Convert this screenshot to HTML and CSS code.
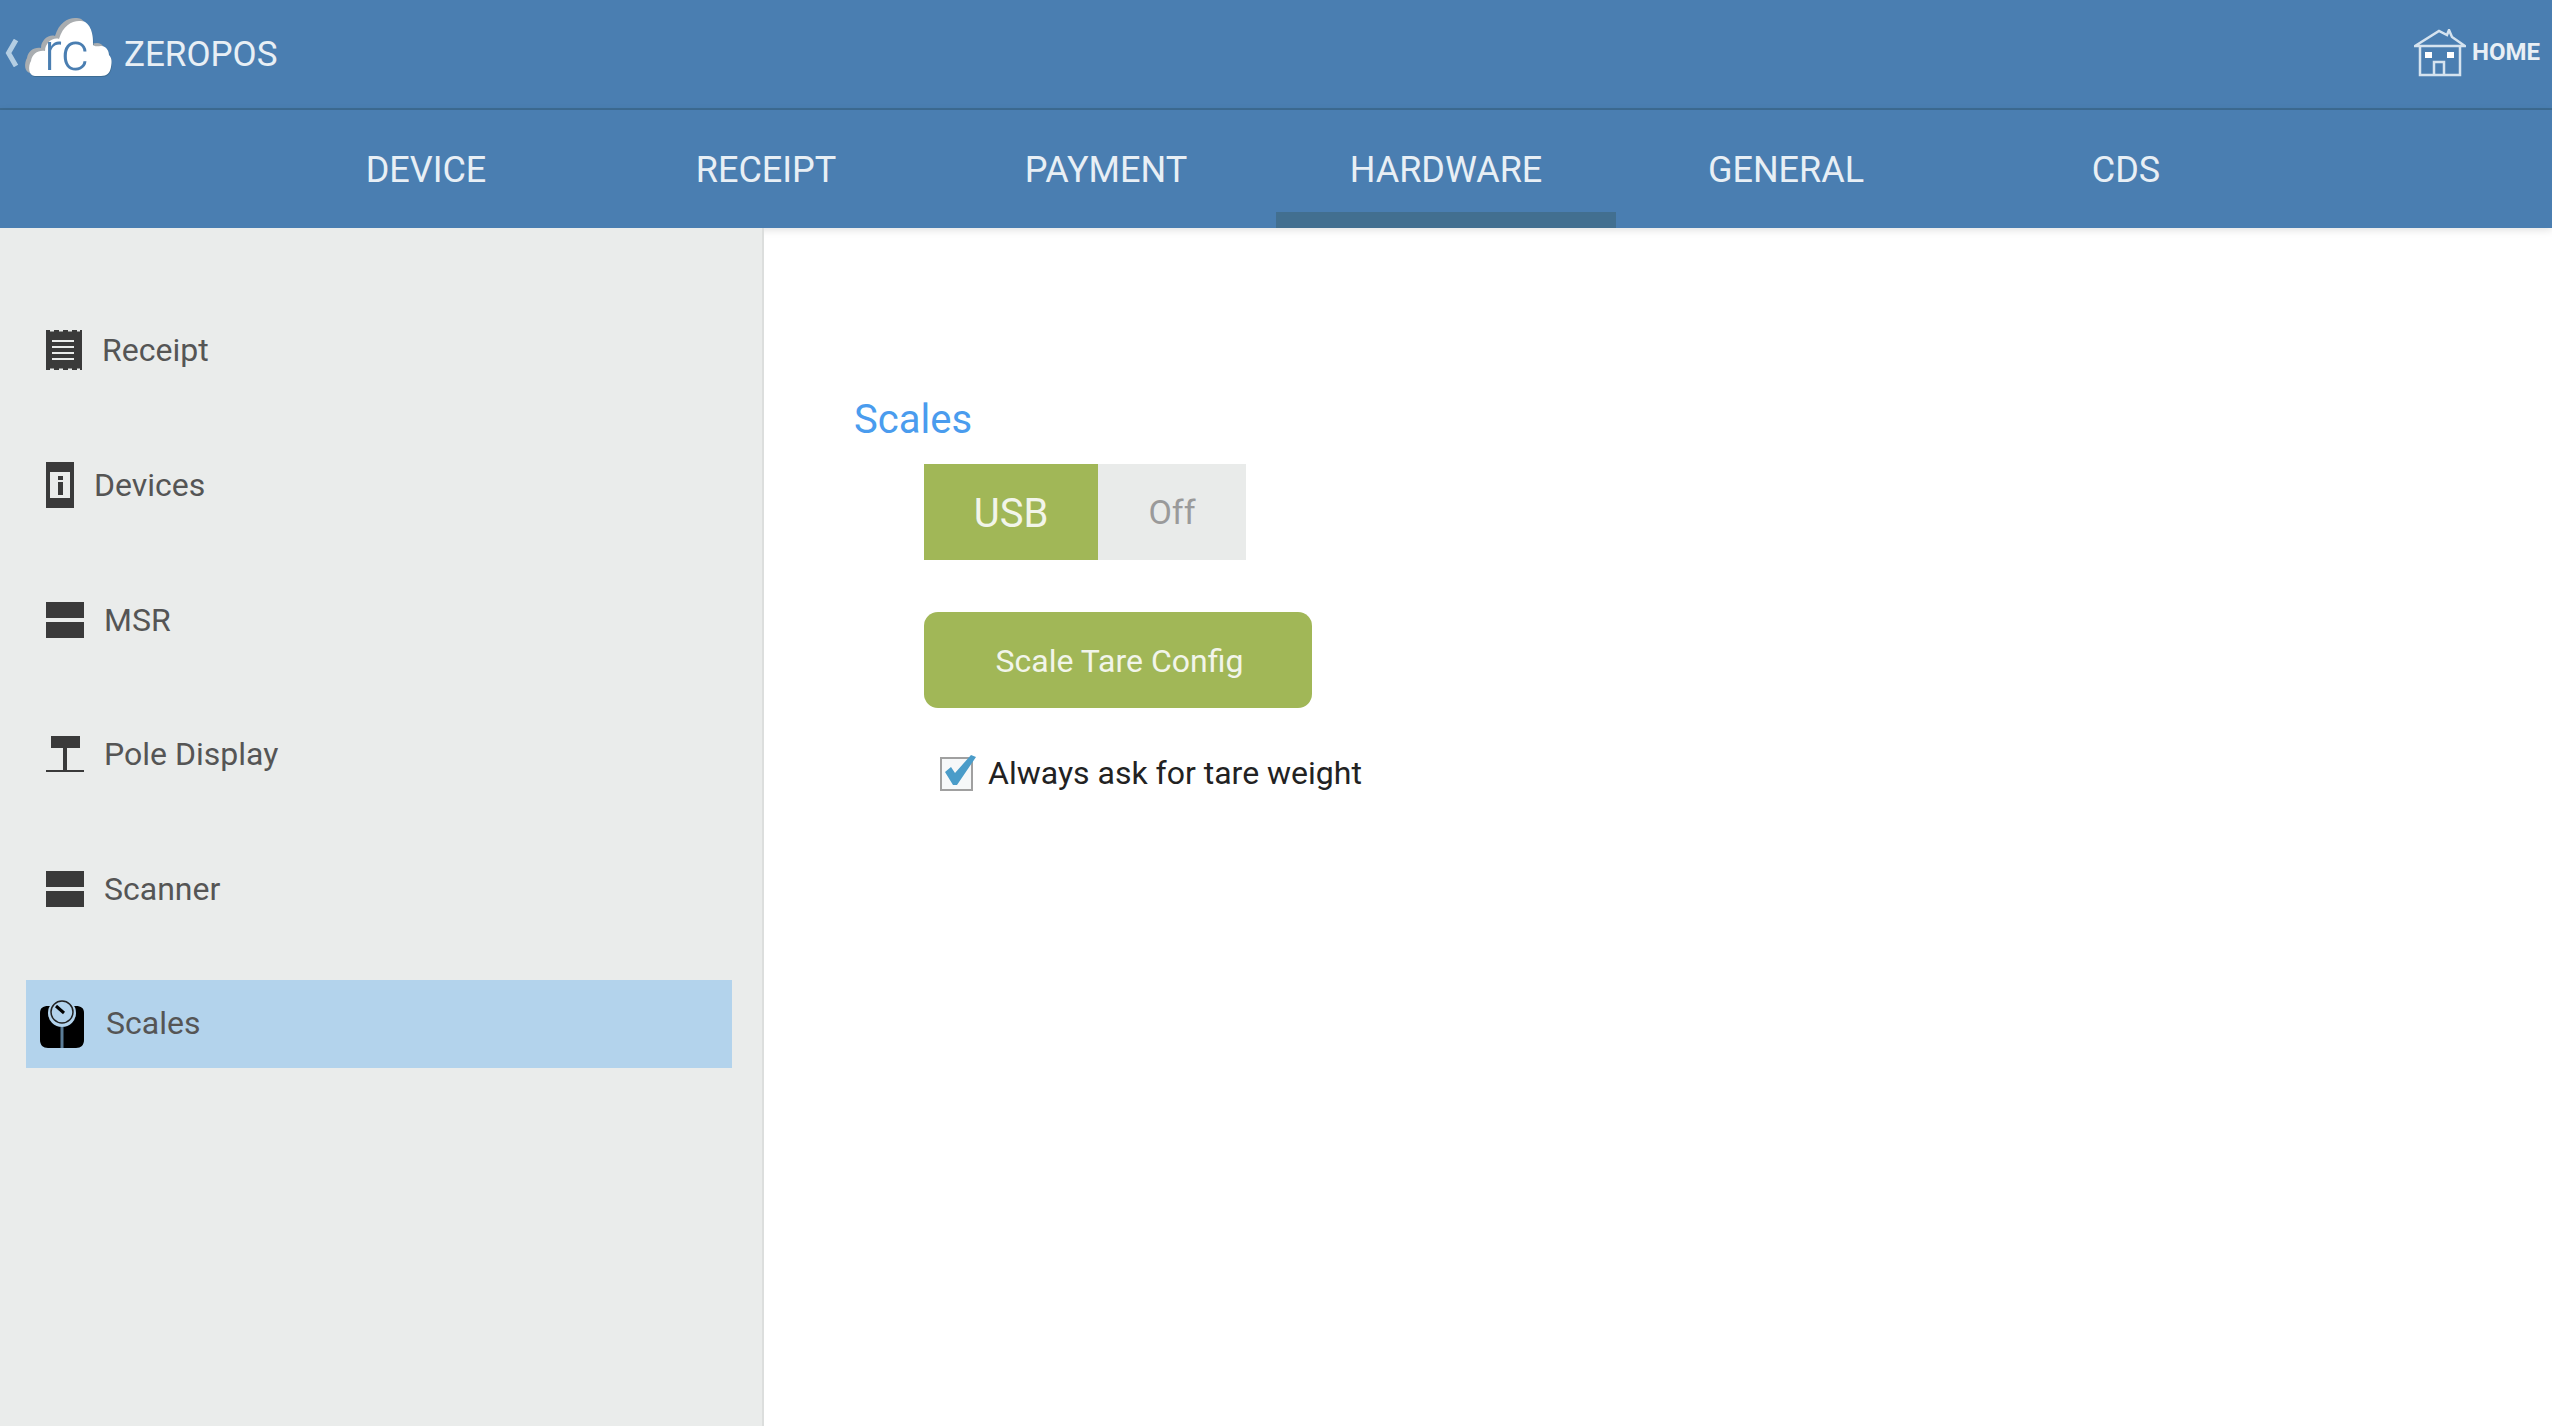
FILE: index.html
```html
<!DOCTYPE html>
<html lang="en">
<head>
    <meta charset="UTF-8">
    <meta name="viewport" content="width=device-width, initial-scale=1.0">
    <title>ZEROPOS Settings</title>
    <link rel="stylesheet" href="styles.css">
</head>
<body>
    <header class="top-bar">
        <div class="brand">
            <svg class="back-icon" width="14" height="28" viewBox="0 0 14 28">
                <path d="M11 1 L3.500 14 L11 27" fill="none" stroke="#b4cee3" stroke-width="5"/>
            </svg>
            <svg class="logo" width="92" height="72" viewBox="0 0 92 72">
                <defs>
                    <path id="cloud" d="M12 59 C5 59 5 49 8 44 C9 37 15 33 22 34 C22 26 30 20 36 22 C40 8 50 3 58 4 C66 4 71 15 70 28 C72 30 75 29 78 29 C84 29 86 35 86 38 C89 41 89 45 88 50 C87 56 84 59 78 59 Z"/>
                </defs>
                <use href="#cloud" x="-4" y="-3" fill="#a9adb0"/>
                <use href="#cloud" x="0.500" y="1" fill="#3d6c93"/>
                <use href="#cloud" fill="#fff"/>
                <text class="logo-text" x="21" y="53">rc</text>
            </svg>
            <span class="brand-name">ZEROPOS</span>
        </div>
        <div class="home">
            <svg width="52" height="48" viewBox="0 0 52 48" fill="none" stroke="#d5e3ef" stroke-width="2.500">
                <path d="M1 17 L25 2 L33 6 L35 1 L38 8 L51 17 Z"/>
                <path d="M6 18 V46 H46 V18"/>
                <path d="M20 46 V33 H30 V46"/>
                <rect x="11" y="23" width="7" height="6" fill="#fff" stroke="none"/>
                <rect x="33" y="23" width="7" height="6" fill="#fff" stroke="none"/>
            </svg>
            <span class="home-label">HOME</span>
        </div>
    </header>

    <nav class="tabs">
        <a class="tab">DEVICE</a>
        <a class="tab">RECEIPT</a>
        <a class="tab">PAYMENT</a>
        <a class="tab active">HARDWARE</a>
        <a class="tab">GENERAL</a>
        <a class="tab">CDS</a>
    </nav>

    <div class="main">
        <aside class="sidebar">
            <div class="side-item">
                <svg class="side-icon" width="36" height="40" viewBox="0 0 36 40">
                    <path d="M0 0 H36 V40 H0 Z" fill="#3a3a3a"/>
                    <path d="M4 0 H8 V1.500 H4 Z M13 0 H17 V1.500 H13 Z M22 0 H26 V1.500 H22 Z M31 0 H34 V1.500 H31 Z M4 38.500 H8 V40 H4 Z M13 38.500 H17 V40 H13 Z M22 38.500 H26 V40 H22 Z M31 38.500 H34 V40 H31 Z" fill="#eaeceb"/>
                    <path d="M6 10 H28 V12 H6 Z M6 16 H28 V18 H6 Z M6 22 H28 V24 H6 Z M6 28 H28 V30 H6 Z" fill="#eaeceb"/>
                </svg>
                <span>Receipt</span>
            </div>
            <div class="side-item">
                <svg class="side-icon" width="28" height="46" viewBox="0 0 28 46">
                    <rect width="28" height="46" fill="#3a3a3a"/>
                    <rect x="4" y="10" width="20" height="26" fill="#eaeceb"/>
                    <rect x="12" y="14" width="5" height="4" fill="#3a3a3a"/>
                    <rect x="12" y="20" width="5" height="13" fill="#3a3a3a"/>
                </svg>
                <span>Devices</span>
            </div>
            <div class="side-item">
                <svg class="side-icon" width="38" height="36" viewBox="0 0 38 36">
                    <rect width="38" height="36" fill="#3a3a3a"/>
                    <rect y="16" width="38" height="4" fill="#eaeceb"/>
                </svg>
                <span>MSR</span>
            </div>
            <div class="side-item">
                <svg class="side-icon" width="38" height="36" viewBox="0 0 38 36">
                    <rect x="5" y="0" width="29" height="12" fill="#3a3a3a"/>
                    <rect x="17" y="12" width="4" height="23" fill="#3a3a3a"/>
                    <rect x="0" y="34" width="38" height="2" fill="#3a3a3a"/>
                </svg>
                <span>Pole Display</span>
            </div>
            <div class="side-item">
                <svg class="side-icon" width="38" height="36" viewBox="0 0 38 36">
                    <rect width="38" height="36" fill="#3a3a3a"/>
                    <rect y="16" width="38" height="4" fill="#eaeceb"/>
                </svg>
                <span>Scanner</span>
            </div>
            <div class="side-item selected">
                <svg class="scale-icon" width="44" height="48" viewBox="0 0 44 48">
                    <path d="M8 6 H36 C41 6 44 8 44 13 V40 C44 45 41 48 36 48 H8 C3 48 0 45 0 40 V13 C0 8 3 6 8 6 Z" fill="#000"/>
                    <circle cx="22" cy="13" r="14" fill="#b3d3ec"/>
                    <circle cx="22" cy="12" r="11" fill="none" stroke="#222" stroke-width="1.500"/>
                    <path d="M16 6 L24 13" stroke="#000" stroke-width="3"/>
                    <rect x="20.500" y="27" width="3" height="21" fill="#5a7c96"/>
                </svg>
                <span class="selected-label">Scales</span>
            </div>
        </aside>

        <section class="content">
            <h2 class="section-title">Scales</h2>
            <div class="options">
                <div class="toggle">
                    <div class="toggle-on">USB</div>
                    <div class="toggle-off">Off</div>
                </div>
                <button class="tare-btn">Scale Tare Config</button>
                <div class="check-row">
                    <svg width="36" height="36" viewBox="0 0 36 36">
                        <rect x="1" y="3" width="31" height="32" fill="#f6f8f9" stroke="#a0a0a0" stroke-width="2"/>
                        <path d="M5 17 L11 12 L15 18 L31 0 L36 2 L17 30 L13 30 Z" fill="#4a9cc9"/>
                    </svg>
                    <span>Always ask for tare weight</span>
                </div>
            </div>
        </section>
    </div>
</body>
</html>
```

FILE: styles.css
```css
* {
    box-sizing: border-box;
}

html, body {
    height: 100%;
}

body {
    margin: 0;
    display: flex;
    flex-direction: column;
    overflow: hidden;
    font-family: Roboto, "Liberation Sans", sans-serif;
    background-color: #fff;
    color: #555;
}

.top-bar {
    height: 110px;
    display: flex;
    align-items: center;
    justify-content: space-between;
    padding: 0 12px 2px 5px;
    background-color: #4a7eb1;
    border-bottom: 2px solid #3d6c93;
}

.brand {
    display: flex;
    align-items: center;
}

.back-icon {
    margin-right: 4px;
}

.logo-text {
    font-family: Roboto, sans-serif;
    font-weight: 300;
    font-size: 53px;
    fill: #4a7eb1;
}

.brand-name {
    margin-left: 9px;
    margin-top: 2px;
    font-size: 35px;
    color: #e8eff5;
}

.home {
    display: flex;
    align-items: center;
    gap: 6px;
    font-size: 24px;
    font-weight: 700;
    color: #e8eff5;
}

.home-label {
    margin-top: -2px;
}

.tabs {
    height: 118px;
    display: flex;
    justify-content: center;
    background-color: #4a7eb1;
    box-shadow: 0 2px 8px rgba(0, 0, 0, 0.12);
}

.tab {
    position: relative;
    width: 340px;
    display: flex;
    align-items: center;
    justify-content: center;
    padding-top: 2px;
    font-size: 36px;
    color: #e8eff5;
}

.tab.active::after {
    content: "";
    position: absolute;
    left: 0;
    right: 0;
    bottom: 0;
    height: 16px;
    background-color: #426f90;
}

.main {
    flex: 1;
    display: flex;
    min-height: 0;
}

.sidebar {
    width: 764px;
    padding: 78px 30px 0 26px;
    display: flex;
    flex-direction: column;
    gap: 46.800px;
    background-color: #eaeceb;
    border-right: 2px solid #dcdedd;
}

.side-item {
    height: 88px;
    display: flex;
    align-items: center;
    padding-left: 20px;
    font-size: 32px;
}

.side-item .side-icon {
    margin-right: 20px;
}

.side-item.selected {
    background-color: #b3d3ec;
    padding-left: 14px;
}

.selected-label {
    margin-top: -2px;
}

.scale-icon {
    margin-right: 22px;
}

.content {
    flex: 1;
    padding: 168px 0 0 90px;
}

.section-title {
    margin: 0 0 20px;
    font-size: 40px;
    font-weight: 400;
    line-height: 48px;
    color: #4a9cee;
}

.options {
    margin-left: 70px;
}

.toggle {
    display: flex;
    height: 96px;
}

.toggle-on {
    width: 174px;
    display: flex;
    align-items: center;
    justify-content: center;
    padding-top: 2px;
    font-size: 40px;
    color: #f2f5ea;
    background-color: #a1b757;
}

.toggle-off {
    width: 148px;
    display: flex;
    align-items: center;
    justify-content: center;
    font-size: 34px;
    color: #9a9a9a;
    background-color: #e9ebea;
}

.tare-btn {
    display: block;
    width: 388px;
    height: 96px;
    margin-top: 52px;
    padding: 2px 0 0 3px;
    border: none;
    border-radius: 14px;
    font-family: inherit;
    font-size: 32px;
    color: #f2f5ea;
    background-color: #a1b757;
}

.check-row {
    display: flex;
    align-items: center;
    gap: 12px;
    margin-top: 46px;
    margin-left: 16px;
    font-size: 32px;
    color: #222;
}
```
